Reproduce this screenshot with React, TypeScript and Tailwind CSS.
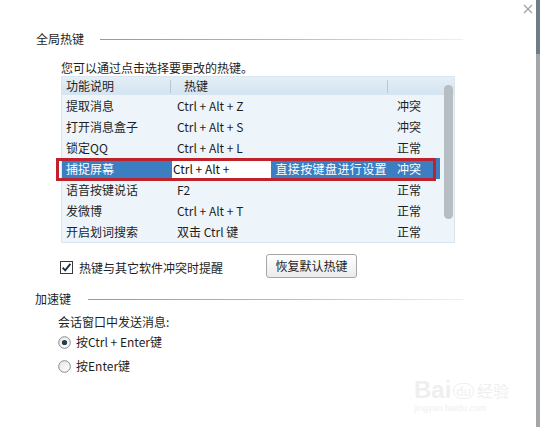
import React from "react";

type Row = { name: string; key: string; status: string };

const rows: Row[] = [
  { name: "提取消息", key: "Ctrl + Alt + Z", status: "冲突" },
  { name: "打开消息盒子", key: "Ctrl + Alt + S", status: "冲突" },
  { name: "锁定QQ", key: "Ctrl + Alt + L", status: "正常" },
  { name: "捕捉屏幕", key: "Ctrl + Alt +", status: "冲突" },
  { name: "语音按键说话", key: "F2", status: "正常" },
  { name: "发微博", key: "Ctrl + Alt + T", status: "正常" },
  { name: "开启划词搜索", key: "双击 Ctrl 键", status: "正常" },
];

function Radio({ checked }: { checked?: boolean }) {
  return (
    <svg width="13" height="13" viewBox="0 0 13 13" className="shrink-0">
      <defs>
        <linearGradient id={checked ? "rg1" : "rg2"} x1="0" y1="0" x2="1" y2="1">
          <stop offset="0" stopColor="#e6e6e6" />
          <stop offset="1" stopColor="#ffffff" />
        </linearGradient>
      </defs>
      <circle cx="6.5" cy="6.5" r="5.8" fill={`url(#${checked ? "rg1" : "rg2"})`} stroke="#8a8a8a" strokeWidth="1" />
      {checked && <circle cx="6.5" cy="6.5" r="2.6" fill="#223a52" />}
    </svg>
  );
}

export default function App() {
  return (
    <div className="w-[540px] h-[427px] bg-white relative flex overflow-hidden font-['Noto_Sans_CJK_SC',sans-serif] text-[12px] text-[#1e1e1e]">
      <div className="flex-1 flex flex-col">
        {/* 全局热键 heading */}
        <div className="mt-[31px] flex items-center h-[16px] pl-[36px] pr-[73px]">
          <span className="leading-[16px]">全局热键</span>
          <div className="ml-[16px] flex-1 h-px bg-gradient-to-r from-[#8e9ba7] via-[#aebbc6] to-[#edf1f4]" />
        </div>
        <div className="mt-[13px] pl-[61px] leading-[16px]">您可以通过点击选择要更改的热键。</div>

        {/* table */}
        <div className="ml-[61px] w-[394px] relative border border-[#dbe5ee] bg-[#edf4fa]">
          <div className="h-[18px] flex items-center bg-gradient-to-b from-[#e4eef8] to-[#d4e4f1]">
            <div className="w-[108px] pl-[4px] leading-[18px]">功能说明</div>
            <div className="w-px h-[13px] bg-[#b9c8d5]" />
            <div className="w-[216px] pl-[13px] leading-[18px]">热键</div>
            <div className="w-px h-[13px] bg-[#b9c8d5]" />
            <div className="flex-1" />
          </div>
          {rows.map((r, i) => {
            const hl = i === 3;
            if (hl) {
              return (
                <div key={i} className="h-[21px] flex items-stretch">
                  <div className="w-[378px] flex items-stretch bg-[#3b7fc2] text-white">
                    <div className="w-[108px] pl-[4px] flex items-center">{r.name}</div>
                    <div className="w-[217px] flex items-stretch">
                      <div className="ml-[2px] w-[107px] bg-white text-[#111] pl-[1px] flex items-center">{r.key}</div>
                      <div className="pl-[4px] flex items-center whitespace-nowrap tracking-[0.4px]">直接按键盘进行设置</div>
                    </div>
                    <div className="flex-1 pl-[10px] flex items-center">{r.status}</div>
                  </div>
                </div>
              );
            }
            return (
              <div key={i} className="h-[21px] flex items-center">
                <div className="w-[108px] pl-[4px]">{r.name}</div>
                <div className="w-[217px] pl-[7px]">{r.key}</div>
                <div className="w-[53px] pl-[10px]">{r.status}</div>
              </div>
            );
          })}
          {/* scrollbar thumb */}
          <div className="absolute left-[382px] top-[8px] w-[9px] h-[134px] rounded-full bg-[#b7bec3]" />
        </div>

        {/* checkbox row */}
        <div className="mt-[11px] pl-[60px] flex items-start h-[24px]">
          <div className="w-[206px] mt-[7px] flex items-center h-[13px]">
            <svg width="13" height="13" viewBox="0 0 13 13" className="shrink-0">
              <rect x="0.5" y="0.5" width="12" height="12" fill="#fff" stroke="#3a3a3a" />
              <path d="M2.6 6.6 L5.2 9.4 L10.4 2.9" fill="none" stroke="#1d2b3a" strokeWidth="1.8" />
            </svg>
            <span className="ml-[6px] leading-[13px] whitespace-nowrap">热键与其它软件冲突时提醒</span>
          </div>
          <div className="w-[91px] h-[24px] border border-[#a6a6a6] rounded-[3px] bg-gradient-to-b from-white to-[#ebebeb] flex items-center justify-center">
            恢复默认热键
          </div>
        </div>

        {/* 加速键 heading */}
        <div className="mt-[13px] flex items-center h-[16px] pl-[35px] pr-[73px]">
          <span className="leading-[16px]">加速键</span>
          <div className="ml-[17px] flex-1 h-px bg-gradient-to-r from-[#8e9ba7] via-[#aebbc6] to-[#edf1f4]" />
        </div>
        <div className="mt-[7px] pl-[58px] leading-[16px]">会话窗口中发送消息:</div>
        <div className="mt-[4px] pl-[58px] h-[16px] flex items-center">
          <Radio checked />
          <span className="ml-[5px]">按Ctrl + Enter键</span>
        </div>
        <div className="mt-[8px] pl-[58px] h-[16px] flex items-center">
          <Radio />
          <span className="ml-[5px]">按Enter键</span>
        </div>
      </div>

      {/* right window edge */}
      <div className="w-[4px] flex flex-col">
        <div className="h-[54px] bg-[#6e7c87]" />
        <div className="flex-1 bg-[#a2a6a9]" />
      </div>

      {/* close X */}
      <svg className="absolute top-[4px] right-[7px]" width="10" height="10" viewBox="0 0 10 10">
        <path d="M1 1 L9 9 M9 1 L1 9" stroke="#a3a3a3" strokeWidth="1.3" />
      </svg>

      {/* red annotation box */}
      <div className="absolute left-[56px] top-[158px] w-[380px] h-[23px] border-[3px] border-[#c0222c]" />

      {/* watermark */}
      <div className="absolute left-[414px] top-[366px] w-[100px] h-[50px] text-[#efefef] pointer-events-none">
        <div className="flex items-end h-[36px]">
          <span className="text-[24px] leading-[24px] font-['Liberation_Sans',sans-serif] font-bold">Bai</span>
          <span className="ml-[2px] text-[12px] leading-[14px] border border-[#efefef] rounded-full px-[2px] mb-[3px]">du</span>
          <span className="ml-[3px] text-[16px] leading-[20px] mb-[2px]">经验</span>
        </div>
        <div className="text-[9px] leading-[12px] font-['Liberation_Sans',sans-serif]">jingyan.baidu.com</div>
      </div>
    </div>
  );
}
